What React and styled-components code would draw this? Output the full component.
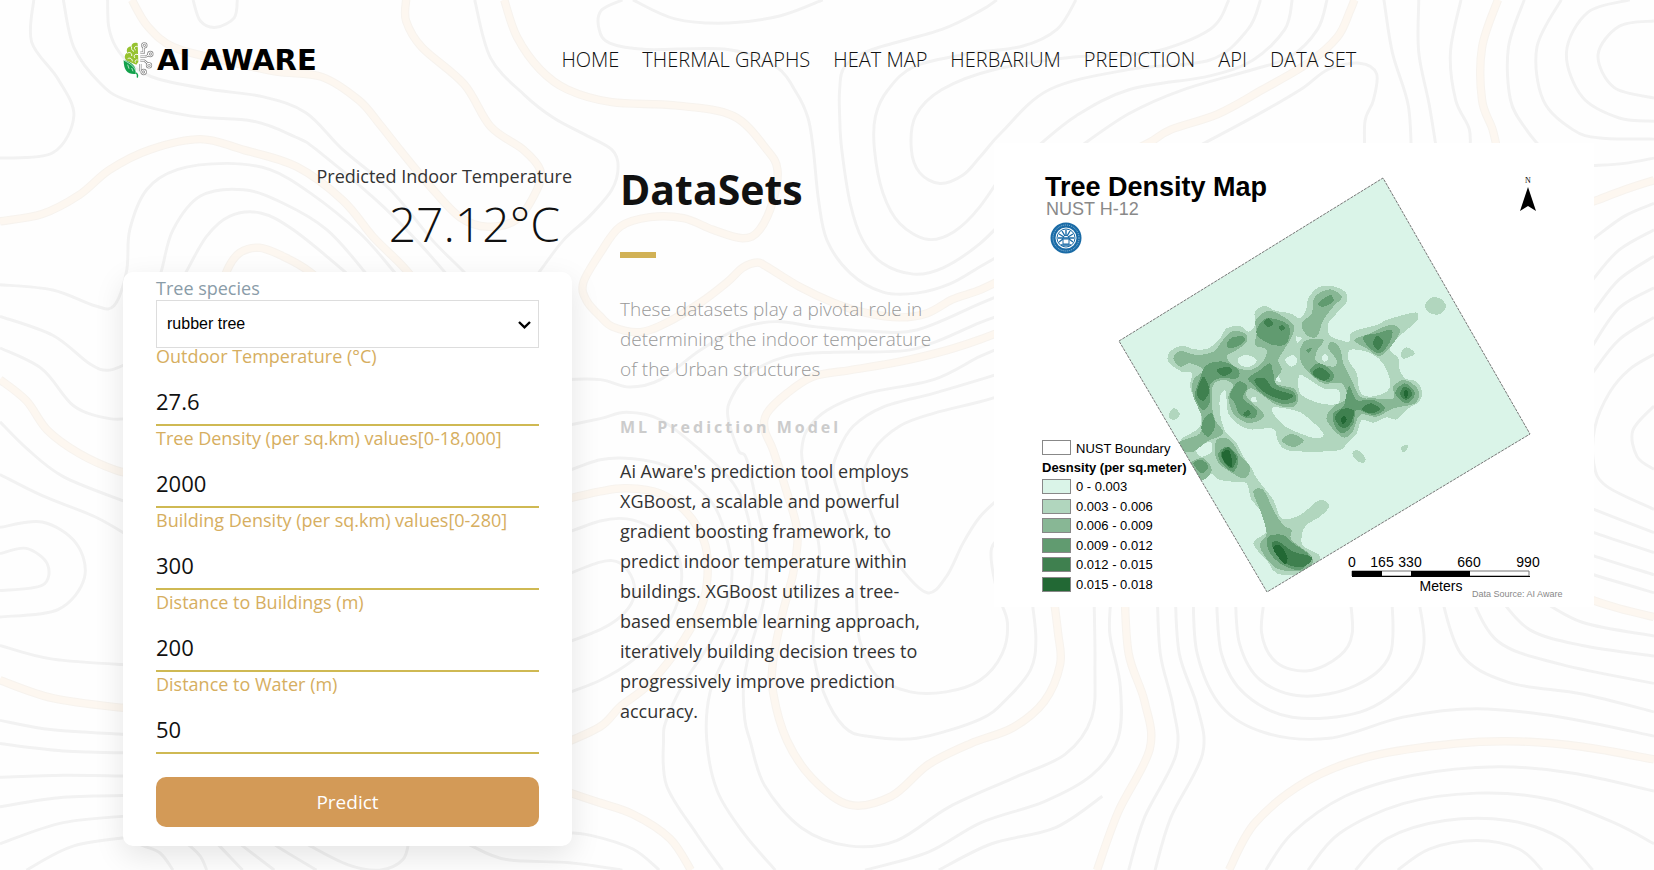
import React from "react";
import styled, { createGlobalStyle } from "styled-components";

const GlobalStyle = createGlobalStyle`
  *, *::before, *::after { box-sizing: border-box; }
  body {
    margin: 0;
    background: #fefefe;
    color: #111;
    font-family: "Open Sans", "Liberation Sans", sans-serif;
  }
`;

/* Smooth curve through a flat "x,y x,y" point list. */
function curve(list, closed) {
  const p = list.trim().split(/\s+/).map((s) => s.split(",").map(Number));
  const n = p.length;
  const at = (i) => (closed ? p[(i + n) % n] : p[Math.max(0, Math.min(n - 1, i))]);
  let d = `M${p[0][0]} ${p[0][1]}`;
  for (let i = 0; i < (closed ? n : n - 1); i++) {
    const [a, b, c, e] = [at(i - 1), at(i), at(i + 1), at(i + 2)];
    const r = (v) => Math.round(v * 10) / 10;
    d += `C${r(b[0] + (c[0] - a[0]) / 6)} ${r(b[1] + (c[1] - a[1]) / 6)} ${r(c[0] - (e[0] - b[0]) / 6)} ${r(c[1] - (e[1] - b[1]) / 6)} ${c[0]} ${c[1]}`;
  }
  return closed ? d + "Z" : d;
}

const Page = styled.div`
  position: relative;
  min-height: 100vh;
  padding-bottom: 24px;
`;

const Backdrop = styled.svg`
  position: absolute;
  inset: 0;
  z-index: -1;
  width: 100%;
  height: 100%;
  fill: none;
`;

const Header = styled.header`
  display: flex;
  align-items: center;
  justify-content: space-between;
  padding: 40px 18% 0 123px;
`;

const Logo = styled.a`
  display: flex;
  align-items: center;
  gap: 3px;
  height: 40px;
  color: #000;
  font: 700 29px/36px "DejaVu Sans", sans-serif;
  text-decoration: none;
  white-space: nowrap;
`;

const Nav = styled.nav`
  display: flex;
  gap: 23px;
`;

const NavLink = styled.a`
  color: #111;
  font-size: 20px;
  font-weight: 300;
  line-height: 40px;
  text-decoration: none;
  white-space: nowrap;
`;

const Main = styled.main`
  display: grid;
  grid-template-columns: 449fr 326fr 600fr;
  gap: 48px;
  align-items: start;
  padding: 63px 60px 0 123px;
`;

const Result = styled.section`
  margin-top: 19px;
  text-align: right;
`;

const ResultLabel = styled.p`
  margin: 0;
  color: #333;
  font-size: 18px;
  font-weight: 400;
  line-height: 28px;
`;

const ResultValue = styled.output`
  display: block;
  padding-right: 12px;
  font-size: 48px;
  font-weight: 300;
  line-height: 68px;
`;

const Card = styled.form`
  display: flex;
  flex-direction: column;
  margin-top: 14px;
  padding: 8px 33px 19px;
  background: #fff;
  border-radius: 10px;
  box-shadow: 0 10px 30px rgba(0, 0, 0, 0.1);
`;

const Field = styled.label`
  display: flex;
  flex-direction: column;
  gap: ${(p) => p.$gap || "0"};
  color: ${(p) => p.$tone || "#d6ae60"};
  font-size: 18px;
  line-height: 16px;
`;

const Fields = styled.div`
  display: flex;
  flex-direction: column;
  gap: 4px;
`;

const SelectBox = styled.span`
  position: relative;
  svg {
    position: absolute;
    right: 8px;
    top: 21px;
    pointer-events: none;
  }
`;

const Select = styled.select`
  display: block;
  width: 100%;
  height: 48px;
  padding: 0 10px 2px;
  border: 1px solid #ddd;
  border-radius: 0;
  appearance: none;
  background: #fff;
  color: #000;
  font: 16px "Liberation Sans", sans-serif;
`;

const Input = styled.input`
  height: 62px;
  padding: 14px 0 0;
  border: 0;
  border-bottom: 2px solid #cfb953;
  background: transparent;
  color: #111;
  font: 400 22px "Open Sans", sans-serif;
  outline: 0;
`;

const Submit = styled.button`
  height: 50px;
  margin-top: 23px;
  border: 0;
  border-radius: 10px;
  background: #d39a57;
  color: #fff;
  font: 500 19px "Open Sans", sans-serif;
  cursor: pointer;
`;

const About = styled.section`
  padding-top: 16px;
`;

const Title = styled.h1`
  margin: 0;
  font-size: 41px;
  font-weight: 700;
  line-height: 60px;
`;

const Rule = styled.hr`
  width: 36px;
  height: 6px;
  margin: 33px 0 36px;
  border: 0;
  background: #d1b155;
`;

const Lead = styled.p`
  margin: 0;
  color: #999;
  font-size: 19px;
  font-weight: 300;
  line-height: 30px;
`;

const Subtitle = styled.h2`
  margin: 33px 0 19px;
  color: #ccc;
  font-size: 16px;
  font-weight: 700;
  letter-spacing: 3px;
  line-height: 20px;
`;

const Body = styled.p`
  margin: 0;
  color: #333;
  font-size: 18px;
  font-weight: 400;
  line-height: 30px;
`;

const Figure = styled.figure`
  margin: 0;
  background: #fff;
  svg { display: block; width: 100%; height: auto; }
`;

const NAV = ["Home", "Thermal Graphs", "Heat Map", "Herbarium", "Prediction", "API", "Data Set"];

const FIELDS = [
  ["outdoor", "Outdoor Temperature (°C)", "27.6"],
  ["trees", "Tree Density (per sq.km) values[0-18,000]", "2000"],
  ["buildings", "Building Density (per sq.km) values[0-280]", "300"],
  ["toBuildings", "Distance to Buildings (m)", "200"],
  ["toWater", "Distance to Water (m)", "50"],
];

const SHADES = ["#daf4e8", "#b1d6be", "#88b795", "#619b70", "#3f804f", "#226834"];
const RANGES = ["0 - 0.003", "0.003 - 0.006", "0.006 - 0.009", "0.009 - 0.012", "0.012 - 0.015", "0.015 - 0.018"];

const DENSITY = [
  [
    "60,520 85,495 120,470 122,430 105,390 90,350 95,310 65,305 25,275 30,245 65,228 105,238 145,235 180,205 200,175 240,168 265,185 285,165 285,125 315,108 345,122 390,130 420,145 438,120 445,85 475,52 515,48 555,65 560,95 530,130 505,160 508,195 540,210 568,215 572,190 610,175 650,165 680,150 730,135 770,128 772,150 740,180 700,215 690,240 715,265 718,295 735,325 770,335 786,365 778,395 745,415 710,448 680,442 640,458 605,450 590,490 560,520 530,542 390,542 355,515 345,480 320,475 270,478 230,460 205,430 200,390 195,360 180,380 180,430 190,470 200,490 230,520 250,560 275,595 290,625 340,690 365,745 420,735 470,695 495,693 508,710 480,740 435,770 425,820 450,840 480,860 460,900 410,915 350,910 320,870 280,820 320,785 320,740 275,690 260,640 220,635 180,630 150,610 125,630 50,640",
    "235,265 260,255 290,270 270,290 240,285",
    "375,270 400,255 412,275 395,290",
    "420,315 450,330 490,355 535,360 535,400 480,400 425,375 415,345",
    "335,415 400,420 440,440 490,490 470,505 420,490 370,465",
    "570,240 620,245 665,275 690,330 680,365 630,380 600,365 590,310 565,270",
    "110,540 150,515 155,545 125,560",
    "485,262 495,252 505,265 493,275",
    "272,385 285,380 290,395 276,396",
    "408,200 425,205 412,218",
    "345,330 355,318 362,335",
    "795,108 812,84 842,86 858,110 840,132 810,130",
    "722,250 740,232 765,250 745,262 728,266",
    "28,430 42,414 60,433 42,450 28,442",
    "577,550 592,540 615,562 612,578 590,572",
    "725,530 745,525 738,542 727,545",
  ],
  [
    "40,265 60,243 110,255 160,245 185,215 215,185 255,190 260,215 230,240 200,260 225,290 270,300 305,280 320,250 315,235 285,225 290,190 288,150 325,122 370,140 400,165 398,195 375,235 355,270 365,300 345,340 400,355 415,385 400,410 350,405 300,370 270,355 260,380 310,430 300,450 260,458 220,430 205,380 220,345 190,330 160,345 155,400 165,450 190,490 140,515 100,545 60,540 60,515 120,490 125,440 100,380 100,330 130,300 90,280 60,290",
    "425,160 455,130 465,80 510,58 545,80 520,110 490,150 470,200 440,195",
    "420,240 440,210 490,210 470,245 470,275 520,290 530,270 505,235 515,215 540,235 550,280 575,330 600,380 640,385 700,385 700,350 735,330 775,360 765,400 700,415 650,440 600,435 575,490 545,500 500,450 520,410 560,385 545,340 490,340 450,310 425,280",
    "583,210 630,190 690,165 720,180 700,220 660,258 620,235",
    "365,512 395,492 431,512 400,531",
    "170,510 210,510 240,555 270,590 255,625 210,605 170,570",
    "280,665 310,660 340,720 370,765 395,780 395,810 455,860 440,900 350,895 300,830 320,790 300,720",
    "90,580 130,565 155,600 130,630 90,620",
  ],
  [
    "200,225 215,203 250,200 250,218 215,235",
    "290,180 320,145 385,165 380,220 340,225 300,205",
    "105,370 120,325 140,285 190,275 235,300 230,325 180,325 150,345 150,395 130,420 110,395",
    "130,450 155,430 165,470 145,500 125,480",
    "210,375 235,335 262,350 250,385 290,420 280,445 240,435 225,400",
    "265,325 300,300 330,280 340,310 350,345 400,365 405,395 360,400 310,375 280,345",
    "438,240 455,234 448,248",
    "450,300 480,280 520,310 510,335 470,325",
    "475,100 510,75 520,95 490,110",
    "610,200 650,190 695,180 690,215 660,250 625,230",
    "520,430 550,410 560,370 570,350 590,390 640,390 675,415 640,435 590,420 580,460 550,490 525,470",
    "705,370 735,340 765,370 740,400",
    "175,550 205,530 235,565 220,605 185,580",
    "100,580 125,570 145,590 125,610",
    "325,800 370,795 400,820 450,860 420,900 360,880 325,840",
  ],
  [
    "312,158 325,145 340,160 325,172",
    "357,172 365,165 375,174 365,182",
    "170,300 205,290 215,305 190,318",
    "110,370 130,320 148,360 130,392",
    "283,330 315,325 340,355 398,375 370,390 310,365",
    "250,432 265,420 272,432 260,440",
    "458,308 480,292 510,315 495,332 470,322",
    "640,215 652,198 670,215 655,240 643,230",
    "525,445 545,418 580,420 575,455 550,475",
    "605,418 630,400 650,408 660,418 635,430",
    "720,372 735,350 757,370 738,390",
    "183,550 205,532 230,565 215,595 195,580",
    "335,825 355,815 400,845 455,862 430,890 375,880",
  ],
  [
    "732,370 738,358 744,370 738,386",
    "542,450 552,438 560,450 550,462",
    "185,552 205,540 215,565 215,590 197,580",
    "340,832 360,825 382,860 375,882 350,855",
  ],
];

const MAJOR_CONTOURS = [
  "125,0 140,25 165,45 215,58 262,68 305,73 340,95 360,118 379,142 408,177 436,206 462,215 490,208 509,180 512,161 496,142 465,120 440,80 400,45 385,20 385,0",
  "0,210 40,203 75,185 104,161 142,142 190,132 230,142 281,158 325,190 354,225 385,256 420,300",
  "205,290 215,257 227,240 246,235 268,243 294,258 330,290",
  "478,0 490,35 512,66 538,85 580,97 640,100 695,110 727,142 737,161 733,190 720,218 704,226 676,218 648,207 616,206 588,215 569,240 553,268 556,285 569,300 581,310 607,315 632,306 664,287 689,268 704,254 718,249 727,253 758,272 790,287 822,297 853,301 879,297 903,284 929,275 960,260",
  "1060,150 1090,135 1110,123 1155,108 1197,85 1240,60 1268,35 1280,10 1284,0",
  "960,310 929,322 898,332 853,343 806,351 771,357 746,373 727,392 725,408 733,427 746,467 756,505 752,543 742,581 733,626 733,657 746,702 770,738 805,763 845,755 880,725 920,705 960,690 990,665 1005,630 1003,600 998,560",
  "530,475 569,466 594,463 626,468 651,486 667,512 671,537 667,569 648,607 616,648 588,670 569,689 530,707",
  "0,360 25,380 45,408 75,430 110,446 130,450",
  "0,645 50,662 115,671 140,672",
  "530,748 565,760 600,772 635,795 655,825",
  "1066,560 1070,620 1085,665 1090,710 1060,770 1040,825",
  "1420,0 1405,45 1405,95 1415,123 1421,150",
  "1490,198 1511,191 1540,180 1568,171",
  "1490,560 1504,567 1535,577 1568,585",
  "1165,825 1190,780 1240,740 1300,717 1380,705 1440,703 1500,708 1568,720",
];

const MINOR_CONTOURS = [
  "0,270 50,275 90,290 108,290 120,257 123,218 139,180 168,161 215,155 256,161 294,183 341,221 373,257 400,290",
  "145,280 153,257 164,218 190,186 231,180 269,193 310,218 345,257 370,290",
  "170,270 177,257 196,224 218,205 247,202 278,218 326,257 350,280",
  "102,0 103,25 110,45 125,62 150,75 200,85 250,92 290,107 325,142 370,180 410,228 439,257 460,280",
  "60,0 70,45 95,79 120,95 180,110 240,115 280,130 300,142 357,190 395,228 425,262",
  "183,0 190,20 205,26 222,17 225,0",
  "32,0 30,40 55,75 70,110 50,145 0,150",
  "500,275 512,257 534,228 559,205 580,180 586,158 580,142 555,128 525,112 497,90 465,55 450,0",
  "590,0 570,10 568,28 578,41 613,47 690,47 735,63 755,88 766,112 771,142 776,190 784,228 806,259 837,277 869,278 901,269 929,253 960,235",
  "945,0 930,10 893,28 827,47 801,63 796,85 796,110 798,142 806,193 818,228 837,250 866,260 894,254 929,231 960,200",
  "1020,0 1002,28 969,44 918,51 867,63 842,85 830,110 829,142 837,183 853,212 879,227 904,220 929,196 960,150",
  "1165,0 1147,28 1090,50 1020,54 943,66 893,85 868,110 864,142 872,164 891,174 913,166 929,149 950,125 995,85 1070,66 1147,57 1183,28 1195,0",
  "980,142 1020,110 1071,85 1147,72 1188,57 1218,28 1225,0",
  "1020,142 1070,108 1122,85 1188,66 1223,54 1249,28 1258,0",
  "1130,142 1190,110 1233,85 1259,66 1289,60 1305,70 1302,95 1294,115 1294,150",
  "600,0 640,18 690,22 740,15 780,0",
  "530,360 569,360 597,367 626,360 664,332 702,311 736,305 774,310 822,314 869,313 929,288 960,275",
  "960,295 929,306 885,325 853,333 790,334 746,338 711,354 694,376 690,395 700,427 708,436 720,490 727,521 724,569 711,616 705,648 706,682 711,702 725,745 760,785 805,802 850,797 900,765 960,738 1010,715 1035,680 1038,630 1037,560",
  "960,325 929,338 885,360 822,373 784,389 765,408 760,427 762,445 771,490 777,525 774,569 771,616 781,657 800,689 822,698 869,700 929,682 955,662 977,635 982,605 977,560",
  "960,350 929,360 885,373 837,386 809,404 795,427 790,449 800,483 811,521 812,569 815,607 831,641 863,656 897,656 929,645 950,620 955,590 945,560 940,520 960,500",
  "960,372 929,381 885,392 853,404 828,427 818,458 831,499 853,537 879,562 897,547 913,515 929,490 950,470",
  "530,450 569,436 600,435 632,442 660,461 679,483 690,515 694,543 689,575 673,610 648,648 632,682 629,702 632,745 660,790 685,825",
  "530,405 569,397 594,391 626,398 664,427 695,458 709,490 714,531 708,575 689,619 673,657 670,702 680,750 705,790 735,825",
  "530,508 569,494 594,492 619,501 638,518 646,540 643,569 629,597 600,626 569,645 530,660",
  "530,548 569,533 588,534 600,550 600,569 588,585 569,597 530,612",
  "0,300 50,318 85,345 104,351 130,340",
  "0,330 40,350 70,385 104,397 130,396",
  "0,400 25,425 60,452 117,475",
  "0,450 40,470 90,490 125,510",
  "0,500 40,495 72,515 80,548 55,578 0,585",
  "0,525 25,520 45,535 40,555 0,560",
  "0,612 50,625 130,631",
  "0,683 50,692 130,697",
  "0,705 60,712 130,714",
  "0,737 60,735 130,736",
  "0,765 60,756 130,754",
  "0,800 60,780 130,773",
  "25,825 70,802 130,793",
  "120,795 136,802 152,809 164,825",
  "170,795 180,802 190,812 196,825",
  "200,795 208,802 230,825",
  "222,795 230,802 260,825",
  "255,795 262,802 300,825",
  "285,795 294,802 330,820 360,825 382,815 388,795",
  "430,792 447,802 480,815 540,818 590,825",
  "530,789 560,792 600,805 625,825",
  "820,825 880,808 930,780 990,760 1035,735 1060,700 1062,650 1052,600 1054,560",
  "890,825 940,800 1000,785 1045,755",
  "1097,560 1100,620 1112,670 1115,715 1085,775 1070,825",
  "1114,560 1118,620 1135,670 1140,715 1110,775 1095,825",
  "1131,560 1135,620 1158,670 1200,695 1260,700 1330,680 1400,672 1480,680 1568,698",
  "1153,560 1158,620 1180,658 1225,680 1290,675 1335,645 1350,610 1343,560",
  "1171,560 1175,610 1195,645 1235,660 1285,650 1318,620 1319,560",
  "1200,560 1196,600 1210,628 1240,636 1270,622 1282,600 1279,560",
  "1365,560 1385,620 1430,647 1500,658 1568,675",
  "1392,560 1420,608 1480,630 1568,648",
  "1420,565 1450,597 1500,612 1568,622",
  "1455,565 1500,590 1568,603",
  "1200,825 1225,790 1275,755 1340,735 1420,727 1490,733 1568,750",
  "1240,825 1270,790 1330,762 1400,752 1470,758 1530,780 1568,800",
  "1285,825 1315,795 1370,778 1430,778 1480,795 1510,825",
  "1325,825 1355,805 1400,797 1440,805 1462,825",
  "1511,157 1540,155 1568,150",
  "1500,234 1511,226 1540,205 1568,193",
  "1500,280 1511,264 1535,237 1568,218",
  "1500,310 1511,295 1535,265 1568,243",
  "1500,345 1511,326 1535,292 1568,273",
  "1500,370 1511,352 1535,322 1568,301",
  "1568,336 1545,350 1526,372 1512,405 1511,440 1523,461 1568,483",
  "1568,385 1548,408 1552,433 1568,445",
  "1500,478 1511,483 1568,505",
  "1500,500 1511,505 1568,524",
  "1500,522 1511,527 1568,545",
  "1500,540 1511,545 1568,562",
  "1568,20 1535,25 1515,52 1530,83 1568,93",
  "1545,0 1505,12 1485,50 1500,92 1535,112 1568,115",
  "1480,0 1457,45 1463,95 1491,123 1517,131 1568,132",
  "1445,0 1430,45 1432,95 1447,123 1465,145",
  "1385,0 1375,50 1380,95 1393,123 1393,150",
  "1345,0 1345,50 1355,100 1363,150",
  "1312,0 1320,50 1335,100 1338,150",
];

const MAJOR = MAJOR_CONTOURS.map((s) => curve(s)).join("");
const MINOR = MINOR_CONTOURS.map((s) => curve(s)).join("");

function Contours() {
  return (
    <Backdrop viewBox="0 0 1568 825" preserveAspectRatio="xMidYMid slice" aria-hidden="true">
      <path d={MINOR} stroke="#f2f2f2" strokeWidth="2.8" />
      <path d={MAJOR} stroke="#f7f3ee" strokeWidth="8" />
      <path d={MAJOR} stroke="#fdf7f0" strokeWidth="6" />
    </Backdrop>
  );
}

function DensityMap() {
  return (
    <svg viewBox="0 0 600 464" role="img" aria-label="Tree density map" fontFamily='"Liberation Sans", Arial, sans-serif'>
      <clipPath id="site"><path d="M125 198 389 35 536 291 273 449Z" /></clipPath>
      <path d="M125 198 389 35 536 291 273 449Z" fill={SHADES[0]} />
      <g clipPath="url(#site)">
        <g transform="translate(166 127) scale(.33333)" shapeRendering="crispEdges">
          {DENSITY.map((shapes, i) => (
            <path key={i} fill={SHADES[i + 1]} fillRule="evenodd" d={shapes.map((s) => curve(s, true)).join("")} />
          ))}
        </g>
      </g>
      <path d="M125 198 389 35 536 291 273 449Z" fill="none" stroke="#777" strokeWidth="1" strokeDasharray="3 1" />
      <text x="51" y="53" fontSize="27" fontWeight="700">Tree Density Map</text>
      <text x="52" y="72" fontSize="18" fill="#898989">NUST H-12</text>
      <g transform="translate(72 95)" fill="none" stroke="#1a6ba6">
        <circle r="13" strokeWidth="5" />
        <circle r="13" strokeWidth="1" stroke="#9cc3de" strokeDasharray="1 1" />
        <circle r="9" fill="#fff" strokeWidth="1" />
        <path d="M0-8V-2M-4-7-1-2M4-7 1-2M-7-4-2-1M7-4 2-1M-8 0H8M-7 4-3 1M7 4 3 1M-5 7H5" strokeWidth="1.4" />
        <path d="M-3 1H3V6H-3Z" fill="#fff" strokeWidth="1" />
      </g>
      <text x="534" y="40" fontSize="8" textAnchor="middle" fontFamily='"Liberation Serif", serif'>N</text>
      <path d="M534 44 542 68 534 63 526 68Z" />
      <g fontSize="13">
        <rect x="48.5" y="297.5" width="28" height="14" fill="#fff" stroke="#888" />
        <text x="82" y="310">NUST Boundary</text>
        <text x="48" y="329" fontWeight="700">Desnsity (per sq.meter)</text>
        {RANGES.map((r, i) => (
          <g key={r} transform={`translate(0 ${Math.round(i * 19.5)})`}>
            <rect x="48.5" y="336.5" width="28" height="14" fill={SHADES[i]} stroke="#888" />
            <text x="82" y="348">{r}</text>
          </g>
        ))}
      </g>
      <g fontSize="14" textAnchor="middle">
        <text x="358" y="424">0</text>
        <text x="388" y="424">165</text>
        <text x="416" y="424">330</text>
        <text x="475" y="424">660</text>
        <text x="534" y="424">990</text>
        <text x="447" y="448">Meters</text>
      </g>
      <path d="M358 428H535V433H358Z" fill="#fff" stroke="#777" />
      <path d="M358 428H388V433H358ZM417 428H476V433H417Z" />
      <path d="M358 433.5H536" stroke="#000" />
      <text x="478" y="454" fontSize="9" fill="#888">Data Source: AI Aware</text>
    </svg>
  );
}

function LogoMark() {
  return (
    <svg width="31" height="36" viewBox="0 0 93 108" fill="none" aria-hidden="true">
      <path d="M44 4C32-1 24 8 26 14 15 12 8 22 13 32 2 38 4 52 12 56L40 68 46 60Z" fill="#96c22f" />
      <path d="M44 14C36 10 30 20 38 24M26 14C24 22 28 26 33 28M13 34C20 28 28 34 26 42M45 38C36 34 30 42 36 48M14 50C20 46 28 50 28 58M44 54C38 52 34 58 38 62" stroke="#fff" strokeWidth="3" />
      <path d="M2 54C2 86 14 98 38 96 42 74 26 60 2 54Z" fill="#12a14b" />
      <path d="M2 54C22 66 42 74 42 107M14 68 18 80M26 78 30 88" stroke="#fff" strokeWidth="2" />
      <path d="M40 92C44 96 44 102 43 107" stroke="#12a14b" strokeWidth="4" />
      <g stroke="#8a8a8a" strokeWidth="7">
        <path d="M52 32H62V14M52 44H68L78 38M52 56H64L76 66M52 66V88" />
        <circle cx="64" cy="10" r="6" /><circle cx="82" cy="36" r="6" /><circle cx="78" cy="70" r="6" /><circle cx="62" cy="90" r="6" />
      </g>
      <g stroke="#fff" strokeWidth="3">
        <path d="M52 32H62V14M52 44H68L78 38M52 56H64L76 66M52 66V88" />
        <circle cx="64" cy="10" r="6" /><circle cx="82" cy="36" r="6" /><circle cx="78" cy="70" r="6" /><circle cx="62" cy="90" r="6" />
      </g>
    </svg>
  );
}

export default function App() {
  return (
    <Page>
      <GlobalStyle />
      <Contours />
      <Header>
        <Logo href="#"><LogoMark />AI AWARE</Logo>
        <Nav>
          {NAV.map((n) => <NavLink key={n} href="#">{n.toUpperCase()}</NavLink>)}
        </Nav>
      </Header>
      <Main>
        <div>
          <Result>
            <ResultLabel>Predicted Indoor Temperature</ResultLabel>
            <ResultValue>27.12°C</ResultValue>
          </Result>
          <Card onSubmit={(e) => e.preventDefault()}>
            <Field $tone="#8a9ca8" $gap="4px">
              Tree species
              <SelectBox>
                <Select name="species" defaultValue="rubber tree"><option>rubber tree</option></Select>
                <svg width="13" height="8" viewBox="0 0 13 8" fill="none" stroke="#000" strokeWidth="2.4" aria-hidden="true">
                  <path d="M1 1 6.5 6.3 12 1" />
                </svg>
              </SelectBox>
            </Field>
            <Fields>
              {FIELDS.map(([id, label, value]) => (
                <Field key={id}>
                  {label}
                  <Input name={id} defaultValue={value} />
                </Field>
              ))}
            </Fields>
            <Submit type="submit">Predict</Submit>
          </Card>
        </div>
        <About>
          <Title>DataSets</Title>
          <Rule />
          <Lead>These datasets play a pivotal role in determining the indoor temperature of the Urban structures</Lead>
          <Subtitle>ML Prediction Model</Subtitle>
          <Body>
            Ai Aware's prediction tool employs XGBoost, a scalable and powerful gradient boosting framework, to predict
            indoor temperature within buildings. XGBoost utilizes a tree-based ensemble learning approach, iteratively
            building decision trees to progressively improve prediction accuracy.
          </Body>
        </About>
        <Figure><DensityMap /></Figure>
      </Main>
    </Page>
  );
}
